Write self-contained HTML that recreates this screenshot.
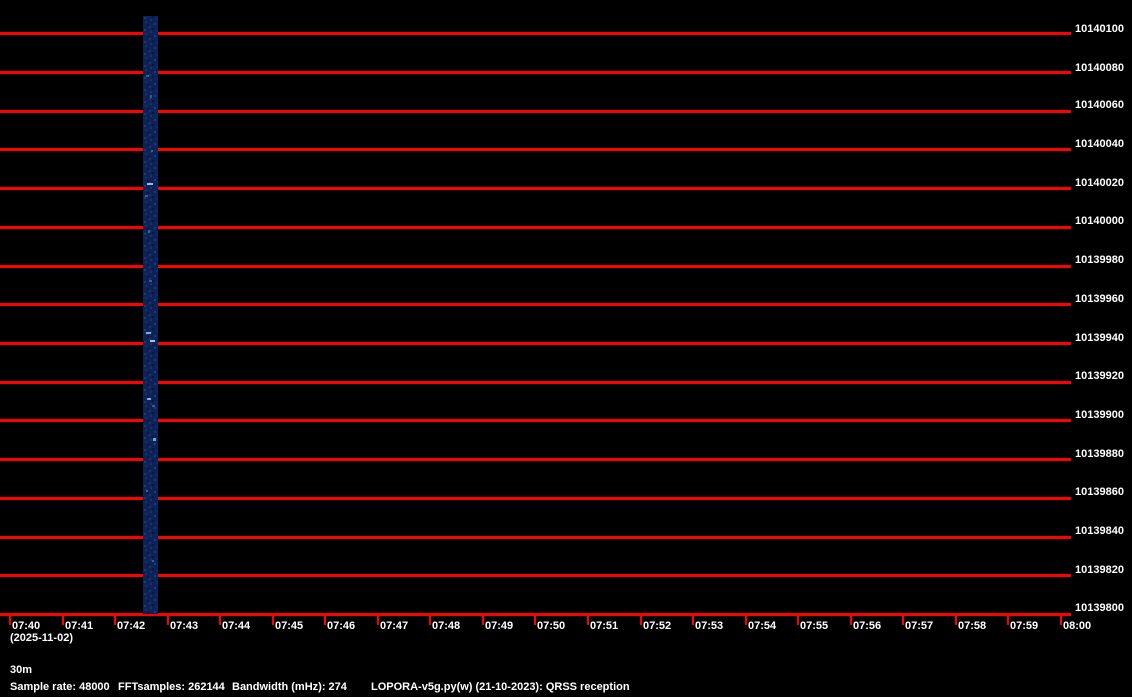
<!DOCTYPE html>
<html><head><meta charset="utf-8"><style>
html,body{margin:0;padding:0;background:#000;width:1132px;height:697px;overflow:hidden}
svg text{font-family:"Liberation Sans",sans-serif;font-weight:bold;font-size:11px;fill:#fff}
</style></head><body>
<svg width="1132" height="697" xmlns="http://www.w3.org/2000/svg">
<defs>
<pattern id="nz" x="143" y="16" width="15" height="12" patternUnits="userSpaceOnUse">
<rect width="15" height="12" fill="#0d2256"/>
<rect x="1" y="1" width="2" height="2" fill="#1a3a78"/>
<rect x="7" y="3" width="2" height="2" fill="#183470"/>
<rect x="11" y="7" width="2" height="2" fill="#1c3d7c"/>
<rect x="4" y="8" width="2" height="2" fill="#08183f"/>
<rect x="9" y="0" width="2" height="2" fill="#08173c"/>
<rect x="2" y="5" width="2" height="2" fill="#163268"/>
<rect x="13" y="2" width="2" height="2" fill="#122a5f"/>
<rect x="6" y="10" width="2" height="2" fill="#1a3775"/>
</pattern>
</defs>
<rect width="1132" height="697" fill="#000"/>
<g fill="#ff0000">
<rect x="0" y="32" width="1071" height="3"/>
<rect x="0" y="71" width="1071" height="3"/>
<rect x="0" y="110" width="1071" height="3"/>
<rect x="0" y="148" width="1071" height="3"/>
<rect x="0" y="187" width="1071" height="3"/>
<rect x="0" y="226" width="1071" height="3"/>
<rect x="0" y="265" width="1071" height="3"/>
<rect x="0" y="303" width="1071" height="3"/>
<rect x="0" y="342" width="1071" height="3"/>
<rect x="0" y="381" width="1071" height="3"/>
<rect x="0" y="419" width="1071" height="3"/>
<rect x="0" y="458" width="1071" height="3"/>
<rect x="0" y="497" width="1071" height="3"/>
<rect x="0" y="536" width="1071" height="3"/>
<rect x="0" y="574" width="1071" height="3"/>
<rect x="0" y="613" width="1071" height="3"/>
</g>
<g fill="#ff0000">
<rect x="9" y="613" width="2" height="12"/><rect x="62" y="613" width="2" height="12"/><rect x="114" y="613" width="2" height="12"/><rect x="167" y="613" width="2" height="12"/><rect x="219" y="613" width="2" height="12"/><rect x="272" y="613" width="2" height="12"/><rect x="324" y="613" width="2" height="12"/><rect x="377" y="613" width="2" height="12"/><rect x="429" y="613" width="2" height="12"/><rect x="482" y="613" width="2" height="12"/><rect x="534" y="613" width="2" height="12"/><rect x="587" y="613" width="2" height="12"/><rect x="640" y="613" width="2" height="12"/><rect x="692" y="613" width="2" height="12"/><rect x="745" y="613" width="2" height="12"/><rect x="797" y="613" width="2" height="12"/><rect x="850" y="613" width="2" height="12"/><rect x="902" y="613" width="2" height="12"/><rect x="955" y="613" width="2" height="12"/><rect x="1007" y="613" width="2" height="12"/><rect x="1060" y="613" width="2" height="12"/>
</g>
<rect x="143" y="16" width="15" height="598" fill="url(#nz)"/>
<g fill="#3d6fa8" opacity="0.8">
<rect x="146" y="75" width="3" height="2"/><rect x="150" y="95" width="2" height="3"/><rect x="147" y="183" width="6" height="2" fill="#b8e0ff"/><rect x="145" y="195" width="3" height="2"/><rect x="149" y="280" width="3" height="2"/><rect x="146" y="332" width="5" height="2" fill="#9fd0f0"/><rect x="150" y="340" width="5" height="2" fill="#d0f0ff"/><rect x="147" y="398" width="4" height="2" fill="#9fd0f0"/><rect x="152" y="405" width="3" height="2"/><rect x="153" y="438" width="3" height="3" fill="#8fc8e8"/><rect x="148" y="230" width="2" height="3"/><rect x="151" y="150" width="2" height="2"/><rect x="146" y="490" width="2" height="2"/><rect x="152" y="560" width="2" height="2"/>
</g>
<g text-anchor="start">
<text x="1075" y="32">10140100</text>
<text x="1075" y="71">10140080</text>
<text x="1075" y="108">10140060</text>
<text x="1075" y="147">10140040</text>
<text x="1075" y="186">10140020</text>
<text x="1075" y="224">10140000</text>
<text x="1075" y="263">10139980</text>
<text x="1075" y="302">10139960</text>
<text x="1075" y="341">10139940</text>
<text x="1075" y="379">10139920</text>
<text x="1075" y="418">10139900</text>
<text x="1075" y="457">10139880</text>
<text x="1075" y="495">10139860</text>
<text x="1075" y="534">10139840</text>
<text x="1075" y="573">10139820</text>
<text x="1075" y="611">10139800</text>
</g>
<g>
<text x="12" y="629">07:40</text><text x="65" y="629">07:41</text><text x="117" y="629">07:42</text><text x="170" y="629">07:43</text><text x="222" y="629">07:44</text><text x="275" y="629">07:45</text><text x="327" y="629">07:46</text><text x="380" y="629">07:47</text><text x="432" y="629">07:48</text><text x="485" y="629">07:49</text><text x="537" y="629">07:50</text><text x="590" y="629">07:51</text><text x="643" y="629">07:52</text><text x="695" y="629">07:53</text><text x="748" y="629">07:54</text><text x="800" y="629">07:55</text><text x="853" y="629">07:56</text><text x="905" y="629">07:57</text><text x="958" y="629">07:58</text><text x="1010" y="629">07:59</text><text x="1063" y="629">08:00</text>
<text x="10" y="641">(2025-11-02)</text>
<text x="10" y="673">30m</text>
<text x="10" y="690">Sample rate: 48000</text>
<text x="118" y="690">FFTsamples: 262144</text>
<text x="232" y="690">Bandwidth (mHz): 274</text>
<text x="371" y="690">LOPORA-v5g.py(w) (21-10-2023): QRSS reception</text>
</g>
</svg>
</body></html>
